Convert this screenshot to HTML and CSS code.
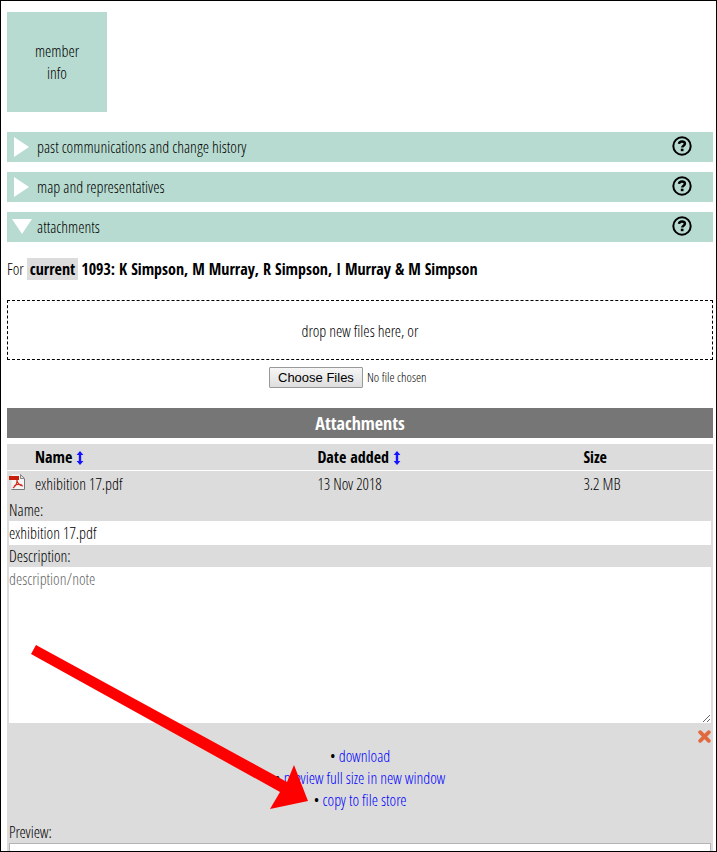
FILE: index.html
```
<!DOCTYPE html>
<html lang="en">
<head>
    <meta charset="utf-8">
    <title>Attachments</title>
    <link rel="stylesheet" href="styles.css">
</head>
<body>
    <svg class="sprite" aria-hidden="true">
        <symbol id="help" viewBox="0 0 20 20">
            <circle cx="10" cy="10" r="8.7" fill="none" stroke="#000" stroke-width="2"/>
            <path d="M7 7.900C7.200 6.200 8.500 5.500 10 5.500c1.700 0 2.900.8 2.900 2.200 0 2-2.700 1.900-2.700 3.900" fill="none" stroke="#000" stroke-width="2.500"/>
            <rect x="8.800" y="12.700" width="2.700" height="2.500"/>
        </symbol>
        <symbol id="sort" viewBox="0 0 8 16">
            <path d="M4 1 7.400 5H5.200v6h2.200L4 15 .6 11H2.800V5H.6z" fill="#1414ff"/>
        </symbol>
    </svg>

    <div class="page">
        <button class="tile">member<br>info</button>

        <div class="section">
            <button class="toggle"><svg class="triangle" viewBox="0 0 20 20"><path d="M2 0 17 10 2 20z"/></svg>past communications and change history</button>
            <button class="help" aria-label="help"><svg><use href="#help"/></svg></button>
        </div>
        <div class="section">
            <button class="toggle"><svg class="triangle" viewBox="0 0 20 20"><path d="M2 0 17 10 2 20z"/></svg>map and representatives</button>
            <button class="help" aria-label="help"><svg><use href="#help"/></svg></button>
        </div>
        <div class="section">
            <button class="toggle"><svg class="triangle" viewBox="0 0 20 20"><path d="M0 2H20L10 17z"/></svg>attachments</button>
            <button class="help" aria-label="help"><svg><use href="#help"/></svg></button>
        </div>

        <p class="member">For <b class="status">current</b> <b>1093: K Simpson, M Murray, R Simpson, I Murray &amp; M Simpson</b></p>

        <div class="drop">drop new files here, or</div>
        <div class="picker"><input type="file" multiple aria-label="choose files"></div>

        <h2 class="title">Attachments</h2>

        <table class="files">
            <colgroup>
                <col class="col-icon">
                <col class="col-name">
                <col class="col-date">
                <col>
            </colgroup>
            <thead>
                <tr>
                    <th></th>
                    <th>Name <svg class="sort"><use href="#sort"/></svg></th>
                    <th>Date added <svg class="sort"><use href="#sort"/></svg></th>
                    <th>Size</th>
                </tr>
            </thead>
            <tbody>
                <tr>
                    <td>
                        <svg class="pdf" viewBox="0 0 16 16">
                            <path d="M2.500.5h9l4 4v11h-13z" fill="#f4f4f4"/>
                            <path d="M15.500 4.500v11h-13" fill="none" stroke="#777"/>
                            <path d="M11.500.5v4h4z" fill="#ddd" stroke="#888"/>
                            <path d="M0 2h10v4H0z" fill="#c8200c"/>
                            <path d="M8 6c.3 3-1.500 6-4 8M8 7c1 3 3 4.500 6 5M5 12c2-1.500 5-2 8-1" fill="none" stroke="#d03020" stroke-width="1.200"/>
                        </svg>
                    </td>
                    <td>exhibition 17.pdf</td>
                    <td>13 Nov 2018</td>
                    <td>3.2 MB</td>
                </tr>
                <tr>
                    <td colspan="4" class="details">
                        <label for="name">Name:</label>
                        <input type="text" id="name" value="exhibition 17.pdf">
                        <label for="description">Description:</label>
                        <textarea id="description" placeholder="description/note"></textarea>
                        <div class="remove">
                            <button aria-label="delete"><svg viewBox="0 0 12 12"><path d="M2 2 10 10M10 2 2 10" stroke="#e0693e" stroke-width="3.400" stroke-linecap="round"/></svg></button>
                        </div>
                        <div class="links">
                            &bull; <a href="#">download</a><br>
                            &bull; <a href="#">preview full size in new window</a><br>
                            &bull; <a href="#">copy to file store</a>
                        </div>
                        <div>Preview:</div>
                        <div class="preview"></div>
                    </td>
                </tr>
            </tbody>
        </table>

        <svg class="arrow" viewBox="0 0 280 166" aria-hidden="true">
            <path d="M6 0 257 137 264 120 278 156 240 164 250 147 1 9z" fill="#f00"/>
        </svg>
    </div>
</body>
</html>
```

FILE: styles.css
```
* {
    box-sizing: border-box;
}

body {
    margin: 0;
    font-family: "Open Sans Condensed Light", "Open Sans Condensed", "Open Sans", sans-serif;
    font-size: 16px;
    font-weight: 300;
    line-height: 22px;
    color: #000;
}

button,
input,
textarea {
    font: inherit;
    color: inherit;
}

button {
    padding: 0;
    border: none;
    background: none;
    cursor: pointer;
}

b,
th,
.title {
    font-family: "Open Sans Condensed", "Open Sans", sans-serif;
    font-weight: bold;
}

.sprite {
    display: none;
}

.page {
    position: relative;
    height: 100vh;
    padding: 11px 3px 0 6px;
    border: 1px solid #000;
    overflow: hidden;
}

.tile {
    display: block;
    width: 100px;
    height: 100px;
    margin-bottom: 20px;
    background-color: #b7dbd0;
}

.section {
    display: flex;
    justify-content: space-between;
    height: 30px;
    margin-bottom: 10px;
    padding: 0 21px 0 5px;
    background-color: #b7dbd0;
}

.toggle {
    display: flex;
    align-items: center;
    gap: 5px;
}

.triangle {
    width: 20px;
    height: 20px;
    fill: #fff;
}

.help {
    height: 27px;
}

.help svg {
    display: block;
    width: 20px;
    height: 20px;
}

.member {
    margin: 16px 0 20px;
    white-space: nowrap;
}

.status {
    display: inline-block;
    padding: 0 3px;
    background-color: #dcdcdc;
}

.drop {
    height: 60px;
    line-height: 60px;
    border: 1px dashed #000;
    text-align: center;
}

.picker {
    display: flex;
    justify-content: center;
    height: 48px;
    padding-top: 7px;
}

.picker input {
    width: 182px;
    height: 21px;
    font-size: 13px;
    line-height: 21px;
}

.picker input::file-selector-button {
    height: 21px;
    margin-right: 4px;
    padding: 0 8px;
    border: 1px solid #999;
    border-radius: 1px;
    background: linear-gradient(#f6f6f6, #dedede);
    font: 13px "Liberation Sans", Arial, sans-serif;
}

.title {
    margin: 0 0 6px;
    background-color: #767676;
    color: #fff;
    font-size: 18px;
    line-height: 30px;
    text-align: center;
}

.files {
    width: 100%;
    table-layout: fixed;
    border-collapse: collapse;
    background-color: #dcdcdc;
}

.col-icon {
    width: 26px;
}

.col-name {
    width: 40%;
}

.col-date {
    width: 266px;
}

th,
td {
    padding: 2px;
    text-align: left;
    vertical-align: top;
}

thead {
    border-bottom: 1px solid #fff;
}

.sort {
    width: 8px;
    height: 16px;
    vertical-align: -3px;
}

.pdf {
    display: block;
    width: 16px;
    height: 16px;
    margin-top: 1px;
}

.details label,
.details input,
.details textarea {
    display: block;
    width: 100%;
    padding: 0;
    border: none;
}

.details input {
    height: 24px;
    background-color: #fff;
}

.details textarea {
    height: 156px;
    padding-top: 1px;
}

.details textarea::placeholder {
    color: #666;
}

.remove {
    height: 22px;
    text-align: right;
}

.remove svg {
    display: block;
    width: 13px;
    height: 13px;
    margin-top: 7px;
}

.links {
    margin-bottom: 10px;
    text-align: center;
}

a {
    color: #00f;
    text-decoration: none;
}

.preview {
    height: 300px;
    border: 1px solid #b4b4b4;
    background-color: #fff;
}

/* points at the copy link */
.arrow {
    position: absolute;
    left: 29px;
    top: 644px;
    width: 280px;
    height: 166px;
}
```
